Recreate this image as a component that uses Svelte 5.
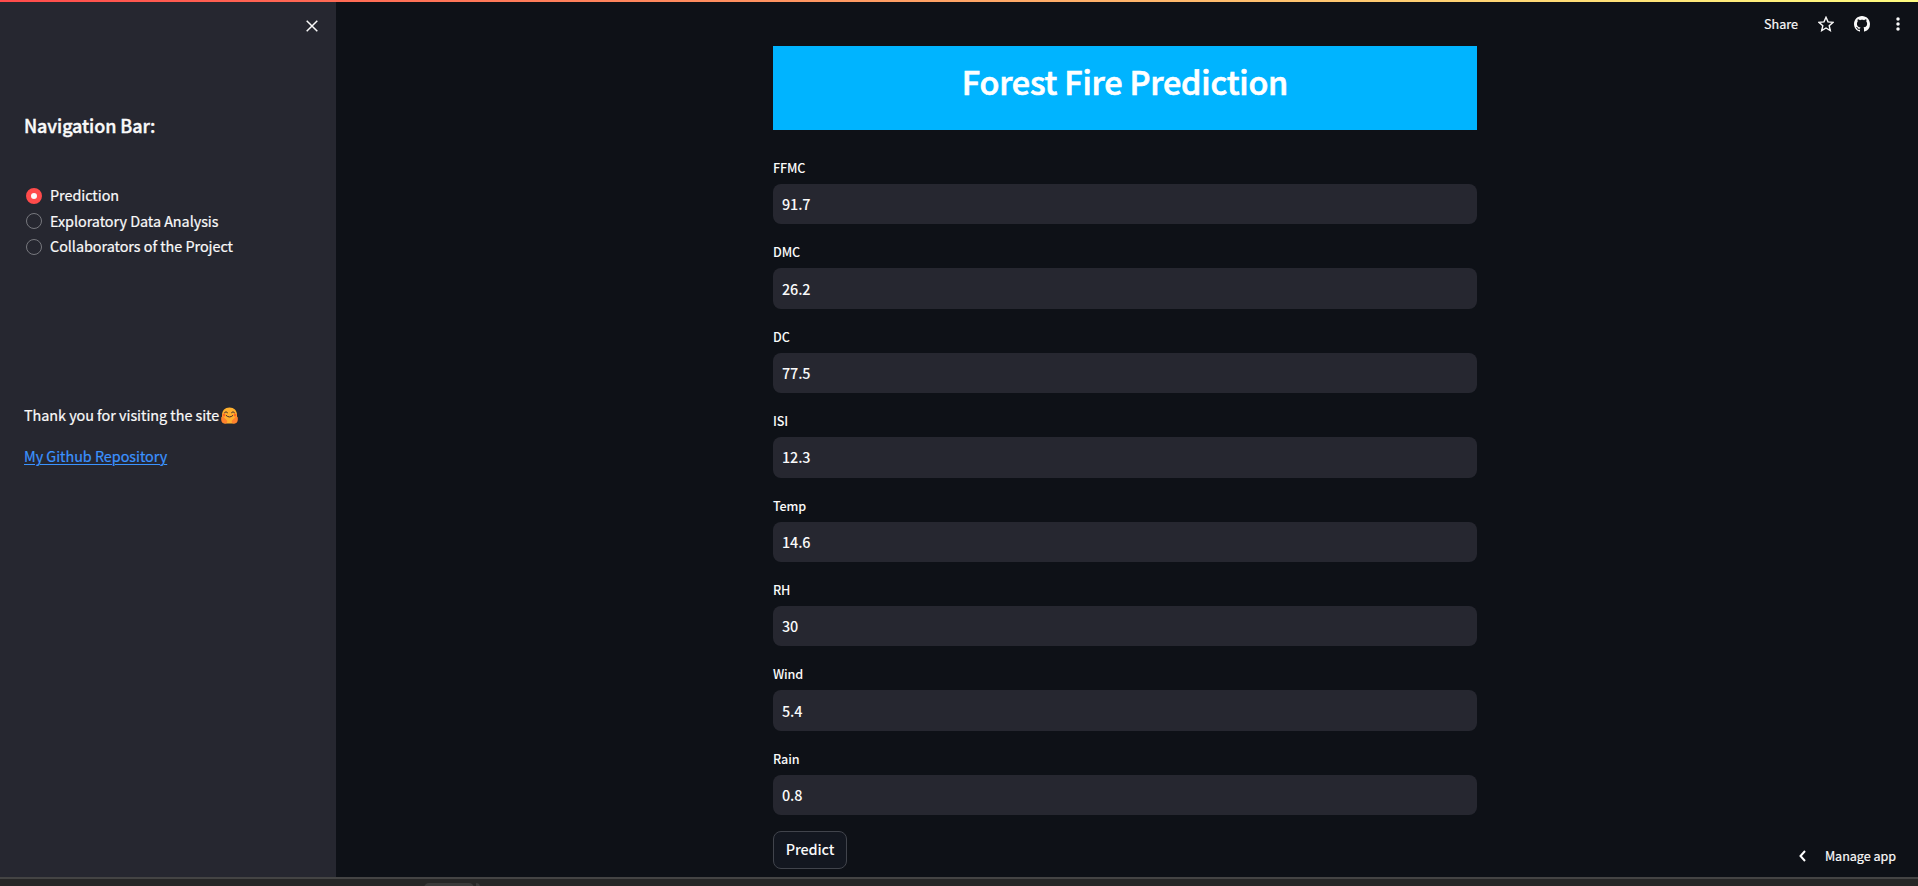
<script>
  const pages = ['Prediction', 'Exploratory Data Analysis', 'Collaborators of the Project'];
  let selected = $state('Prediction');
  let fields = $state([
    { label: 'FFMC', value: '91.7' },
    { label: 'DMC', value: '26.2' },
    { label: 'DC', value: '77.5' },
    { label: 'ISI', value: '12.3' },
    { label: 'Temp', value: '14.6' },
    { label: 'RH', value: '30' },
    { label: 'Wind', value: '5.4' },
    { label: 'Rain', value: '0.8' }
  ]);
</script>

<div class="screen">
  <div class="decoration"></div>
  <div class="app">
    <aside>
      <div class="close-row">
        <button class="icon" aria-label="Close">
          <svg width="12" height="12" viewBox="0 0 12 12"><path d="M.7.7 11.3 11.3M11.3.7.7 11.3" stroke="#fafafa" stroke-width="1.5" fill="none" /></svg>
        </button>
      </div>
      <h3>Navigation Bar:</h3>
      <div class="radios">
        {#each pages as page}
          <label class="radio">
            <input type="radio" name="page" value={page} bind:group={selected} />
            <span>{page}</span>
          </label>
        {/each}
      </div>
      <p class="thanks">
        <span>Thank you for visiting the site</span>
        <svg width="17" height="17" viewBox="0 0 17 17">
          <path d="M1 8.2C1 3.5 4 .5 8.5.5S16 3.500 16 8.200v5c0 2-1.300 3.300-3.200 3.300H4.200C2.300 16.500 1 15.200 1 13.200z" fill="#ffb02e" />
          <path d="M.2 10.500c.5-1.300 2-1.200 3 .2l2.600 2.600c1 1.200.4 3.200-1.500 3.300C1.700 16.700.2 15 .2 12.800zM16.800 10.500c-.5-1.300-2-1.200-3 .2l-2.600 2.600c-1 1.200-.4 3.200 1.500 3.300 2.600.1 4.100-1.600 4.100-3.800z" fill="#ff822d" />
          <circle cx="3" cy="8" r="1.500" fill="#ff6723" /><circle cx="14" cy="8" r="1.500" fill="#ff6723" />
          <path d="M3.500 5.600q1.500-2 3 0M10.500 5.600q1.500-2 3 0M5.300 8.600q3.200 3 6.400 0" stroke="#402a32" stroke-width="1" fill="none" stroke-linecap="round" />
        </svg>
      </p>
      <a href="#repo">My Github Repository</a>
    </aside>

    <main>
      <header>
        <span class="share">Share</span>
        <svg class="star" width="16" height="16" viewBox="0 0 16 16"><path d="M8 1.300 10 5.900 15 6.400 11.200 9.700 12.300 14.600 8 12 3.700 14.600 4.800 9.700 1 6.400 6 5.900z" fill="none" stroke="#fafafa" stroke-width="1.400" /></svg>
        <svg class="github" width="16" height="16" viewBox="0 0 16 16"><path fill="#fafafa" d="M8 0C3.580 0 0 3.580 0 8c0 3.540 2.290 6.530 5.470 7.590.4.070.55-.17.55-.38 0-.19-.01-.82-.01-1.490-2.010.37-2.530-.49-2.690-.94-.09-.23-.48-.94-.82-1.130-.28-.15-.68-.52-.01-.53.63-.01 1.080.58 1.230.82.72 1.210 1.870.87 2.330.66.07-.52.28-.87.51-1.070-1.780-.2-3.640-.89-3.640-3.950 0-.87.31-1.590.82-2.150-.08-.2-.36-1.020.08-2.120 0 0 .67-.21 2.200.82.64-.18 1.320-.27 2-.27s1.360.09 2 .27c1.530-1.040 2.200-.82 2.200-.82.44 1.100.16 1.920.08 2.120.51.56.82 1.270.82 2.150 0 3.070-1.870 3.750-3.650 3.950.29.25.54.73.54 1.480 0 1.070-.01 1.930-.01 2.200 0 .21.15.46.55.38A8.010 8.010 0 0 0 16 8c0-4.420-3.580-8-8-8z" /></svg>
        <svg class="dots" width="4" height="14" viewBox="0 0 4 14"><circle cx="2" cy="2" r="1.750" fill="#fafafa" /><circle cx="2" cy="7" r="1.750" fill="#fafafa" /><circle cx="2" cy="12" r="1.750" fill="#fafafa" /></svg>
      </header>

      <section>
        <h1>Forest Fire Prediction</h1>
        {#each fields as field}
          <label class="field">
            <span>{field.label}</span>
            <input type="text" bind:value={field.value} />
          </label>
        {/each}
        <button class="predict">Predict</button>
      </section>

      <div class="manage">
        <svg width="7" height="12" viewBox="0 0 7 12"><path d="M6 1 1.500 6 6 11" fill="none" stroke="#fff" stroke-width="2" /></svg>
        <span>Manage app</span>
      </div>
    </main>
  </div>
  <footer><i></i><b></b></footer>
</div>

<style>
  :global(body) { background: #0e1117; overflow: hidden; }
  * { box-sizing: border-box; }
  .screen {
    width: 1918px; height: 886px; display: flex; flex-direction: column; overflow: hidden;
    background: #0e1117; color: #fafafa;
    font: 500 14.4px/24px "Noto Sans CJK SC", "Noto Sans", sans-serif;
    letter-spacing: -0.14px;
  }
  button, input { font: inherit; color: inherit; letter-spacing: inherit; margin: 0; }
  h1, h3, p { margin: 0; }
  svg { display: block; flex: none; }
  .decoration { height: 2px; flex: none; background: linear-gradient(90deg, #ff4b4b, #fffd80); }
  .app { height: 875px; display: flex; flex: none; }
  aside { width: 336px; background: #262730; padding: 0 24px; display: flex; flex-direction: column; align-items: flex-start; font-weight: 400; letter-spacing: -0.04px; -webkit-text-stroke: 0.2px; }
  .close-row { align-self: stretch; display: flex; justify-content: flex-end; padding: 18px 0 0; margin-right: -6px; }
  .icon { border: 0; background: none; padding: 0; height: 12px; }
  h3 { font-size: 18px; font-weight: 500; -webkit-text-stroke: 0.400px; line-height: 24px; letter-spacing: -0.100px; margin-top: 81px; white-space: nowrap; }
  .radios { margin-top: 46px; padding-left: 2px; }
  .radio { display: flex; gap: 8px; align-items: center; height: 25.6px; }
  .radio span { padding-bottom: 1.500px; }
  .radio input { appearance: none; width: 16px; height: 16px; border: 1px solid #77787e; border-radius: 50%; }
  .radio input:checked { border: 5px solid #ff4b4b; background: #fafafa; }
  .thanks { display: flex; align-items: center; gap: 2px; margin-top: 143px; }
  .thanks svg { margin-top: 1px; }
  a { color: #3b93ff; margin-top: 17px; text-decoration: underline; text-underline-offset: 2px; text-decoration-thickness: 1px; }
  main { flex: 1; display: grid; grid-template-columns: 1fr 704px 1fr; padding-right: 4px; }
  header { grid-column: 3; grid-row: 1; justify-self: end; align-self: start; display: flex; align-items: center; height: 44px; padding-right: 14px; font-size: 12.600px; font-weight: 400; letter-spacing: 0; -webkit-text-stroke: 0.2px; }
  .star { margin-left: 20px; }
  .github { margin-left: 20px; }
  .dots { margin-left: 26px; }
  section { grid-column: 2; grid-row: 1; padding-top: 44px; display: flex; flex-direction: column; align-items: stretch; }
  h1 { height: 84px; flex: none; margin-bottom: 26px; background: #00b4ff; color: #fff; font-size: 32.400px; line-height: 70px; font-weight: 500; -webkit-text-stroke: 0.700px; letter-spacing: -0.200px; text-align: center; }
  .field { display: flex; flex-direction: column; height: 84.4px; flex: none; }
  .field span { height: 28px; line-height: 24px; font-size: 12.600px; }
  .field input { height: 40.400px; padding: 0 9px 1px; border: 0; border-radius: 8px; background: #262730; outline: 0; }
  .predict { align-self: flex-start; flex: none; width: 74px; height: 38px; border: 1px solid #41444c; border-radius: 8px; background: #131720; padding: 0 0 2px; }
  .manage { grid-column: 3; grid-row: 1; justify-self: end; align-self: end; display: flex; align-items: center; gap: 19px; height: 42px; padding-right: 18px; font-size: 12.600px; font-weight: 400; letter-spacing: -0.04px; -webkit-text-stroke: 0.2px; }
  footer { flex: 1; display: flex; gap: 2px; background: #262626; border-top: 2px solid #444; padding: 4px 0 0 424px; overflow: hidden; }
  footer i { width: 50px; height: 10px; background: #3a3a3a; border-radius: 5px; }
  footer b { width: 4px; height: 10px; background: #3a3a3a; border-radius: 0 4px 0 0; }
</style>
